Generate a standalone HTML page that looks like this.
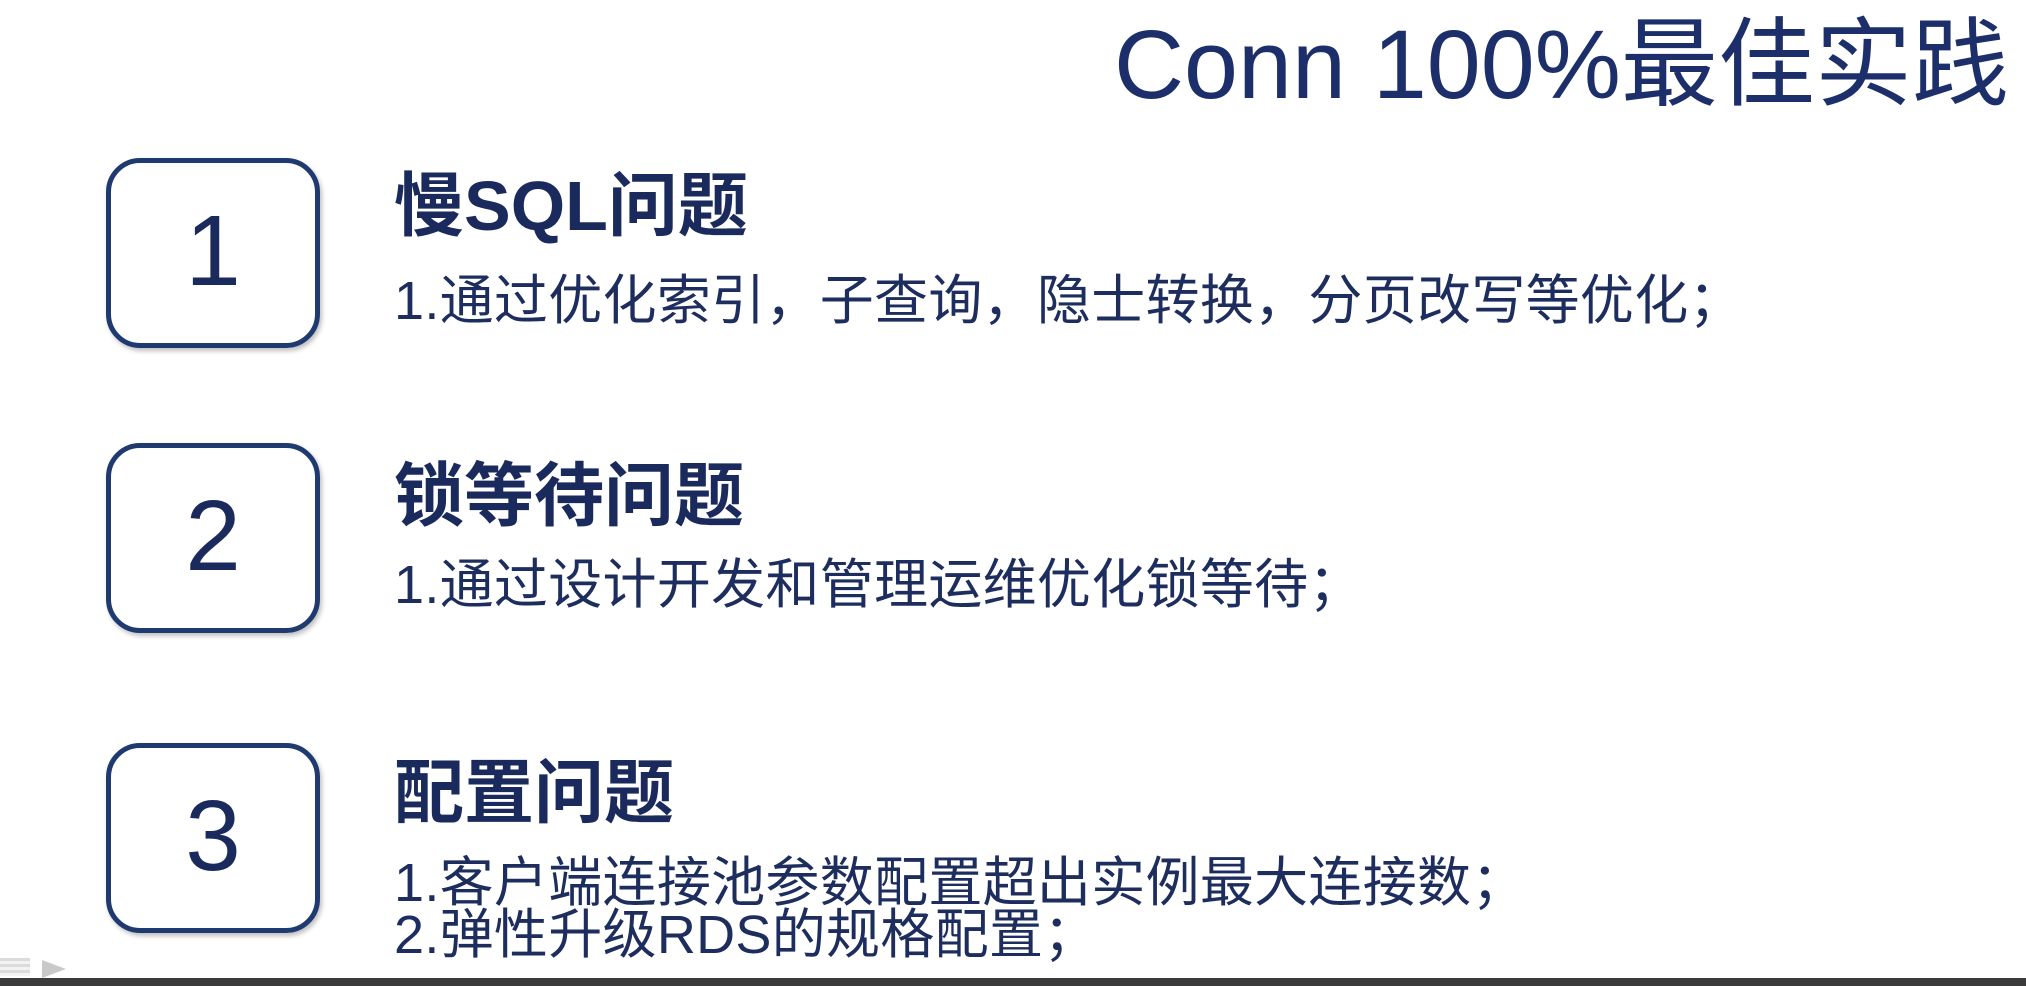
<!DOCTYPE html>
<html><head><meta charset="utf-8"><style>
html,body{margin:0;padding:0;}
body{width:2026px;height:986px;position:relative;overflow:hidden;background:#fff;font-family:"Liberation Sans","Noto Sans CJK SC",sans-serif;color:#1b2a5c;}
.t{position:absolute;white-space:nowrap;line-height:1;}
.box{position:absolute;left:106px;width:204px;height:180px;border:5px solid #1f3a70;border-radius:34px;box-shadow:2px 3px 5px rgba(0,0,0,0.25);}
.num{position:absolute;left:0;right:0;text-align:center;font-size:100px;line-height:1;color:#1b2a5c;top:38px;}
.h{font-size:70px;font-weight:bold;left:394px;}
.s{font-size:54px;left:394px;color:#1d2d5e;letter-spacing:0.3px;}
</style></head><body>
<div class="t" style="left:1114px;top:16px;font-size:97px;color:#1d2f6a;">Conn 100%最佳实践</div>

<div class="box" style="top:158px;"><div class="num">1</div></div>
<div class="box" style="top:443px;"><div class="num">2</div></div>
<div class="box" style="top:743px;"><div class="num">3</div></div>

<div class="t h" style="top:171px;">慢SQL问题</div>
<div class="t s" style="top:274px;">1.通过优化索引，子查询，隐士转换，分页改写等优化；</div>

<div class="t h" style="top:461px;">锁等待问题</div>
<div class="t s" style="top:558px;">1.通过设计开发和管理运维优化锁等待；</div>

<div class="t h" style="top:758px;">配置问题</div>
<div class="t s" style="top:856px;">1.客户端连接池参数配置超出实例最大连接数；</div>
<div class="t s" style="top:908px;">2.弹性升级RDS的规格配置；</div>

<div style="position:absolute;left:0;top:958px;width:30px;height:18px;background:repeating-linear-gradient(#ccc 0 3px,#eee 3px 6px);opacity:.7"></div>
<div style="position:absolute;left:42px;top:960px;width:0;height:0;border-left:24px solid #bbb;border-top:9px solid transparent;border-bottom:9px solid transparent;opacity:.8"></div>
<div style="position:absolute;left:0;top:978px;width:2026px;height:8px;background:#3b3b3b;"></div>
</body></html>
